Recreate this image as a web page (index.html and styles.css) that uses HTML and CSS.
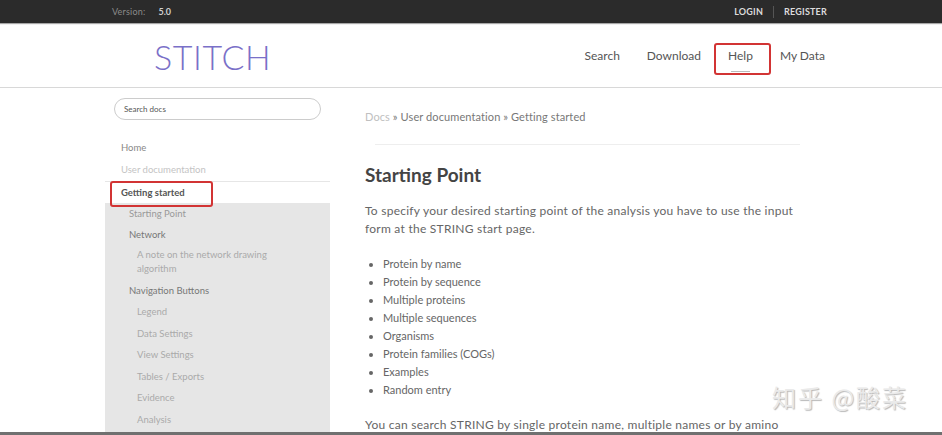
FILE: index.html
```html
<!DOCTYPE html>
<html>
<head>
<meta charset="utf-8">
<link rel="stylesheet" href="styles.css">
</head>
<body>
<div class="topbar">
  <div class="version"><span class="vlabel">Version:</span><span class="vnum">5.0</span></div>
  <div class="auth"><span class="login">LOGIN</span><span class="register">REGISTER</span></div>
</div>
<div class="header">
  <div class="logo">STITCH</div>
  <nav class="mainnav">
    <span class="navlink">Search</span>
    <span class="navlink">Download</span>
    <span class="navlink active">Help<span class="mark mark-help"></span></span>
    <span class="navlink">My Data</span>
  </nav>
</div>
<div class="page">
  <aside class="sidebar">
    <div class="search">Search docs</div>
    <ul class="toc">
      <li class="toc-top">Home</li>
      <li class="toc-top muted">User documentation</li>
      <li class="toc-current">Getting started<span class="mark mark-gs"></span></li>
    </ul>
    <ul class="panel">
      <li class="l2">Starting Point</li>
      <li class="l2 dark">Network</li>
      <li class="l3 two">A note on the network drawing algorithm</li>
      <li class="l2 dark">Navigation Buttons</li>
      <li class="l3">Legend</li>
      <li class="l3">Data Settings</li>
      <li class="l3">View Settings</li>
      <li class="l3">Tables / Exports</li>
      <li class="l3">Evidence</li>
      <li class="l3">Analysis</li>
    </ul>
  </aside>
  <main class="content">
    <div class="crumbs"><span class="docs">Docs</span> » User documentation » Getting started</div>
    <hr class="rule">
    <h1>Starting Point</h1>
    <p>To specify your desired starting point of the analysis you have to use the input form at the STRING start page.</p>
    <ul class="list">
      <li>Protein by name</li>
      <li>Protein by sequence</li>
      <li>Multiple proteins</li>
      <li>Multiple sequences</li>
      <li>Organisms</li>
      <li>Protein families (COGs)</li>
      <li>Examples</li>
      <li>Random entry</li>
    </ul>
    <p class="last">You can search STRING by single protein name, multiple names or by amino acid sequence.</p>
  </main>
</div>
<div class="watermark">知乎 @酸菜</div>
<div class="bottomline"></div>
</body>
</html>
```
FILE: styles.css
```css
html, body {
  margin: 0;
  padding: 0;
  height: 435px;
  overflow: hidden;
  background: #fff;
  font-family: Lato, "Open Sans", sans-serif;
  color: #666;
}
.topbar {
  height: 23px;
  background: #2b2b2b;
  display: flex;
  justify-content: space-between;
  align-items: center;
  padding: 0 115px 0 112px;
  font-size: 9px;
  box-shadow: 0 1px 1px rgba(0,0,0,0.35);
  position: relative;
}
.vlabel { color: #8a8a8a; margin-right: 13px; letter-spacing: 0.2px; }
.vnum { color: #d0d0d0; font-weight: bold; }
.auth { display: flex; align-items: center; }
.login, .register { color: #dcdcdc; font-weight: bold; letter-spacing: 0.2px; }
.login { padding-right: 10px; border-right: 1px solid #555; margin-right: 10px; line-height: 12px; }
.header {
  height: 64px;
  display: flex;
  align-items: center;
  justify-content: space-between;
  padding: 0 117px 0 154px;
  border-bottom: 1px solid #d8d8d8;
}
.logo {
  font-size: 34px;
  color: #7a70c8;
  font-weight: 300;
  letter-spacing: 0.6px;
  margin-top: 2px;
}
.mainnav { display: flex; align-items: center; margin-top: 1px; }
.navlink {
  font-size: 12px;
  color: #555;
  margin-left: 27px;
  position: relative;
}
.navlink.active::after {
  content: "";
  position: absolute;
  left: 3px;
  right: 3px;
  bottom: -9px;
  height: 1px;
  background: #bbb;
}
.mark {
  position: absolute;
  border: 2px solid #d23434;
  border-radius: 3px;
}
.mark-help { left: -14px; top: -5px; width: 53px; height: 28px; }
.page { display: flex; padding-left: 105px; }
.sidebar { width: 225px; padding-top: 10px; }
.search {
  margin: 0 9px;
  height: 20px;
  border: 1px solid #ccc;
  border-radius: 11px;
  font-size: 8px;
  color: #555;
  line-height: 20px;
  padding-left: 9px;
}
.toc, .panel { list-style: none; margin: 0; padding: 0; }
.toc { margin-top: 17px; font-size: 9.5px; }
.toc li { line-height: 22px; padding-left: 16px; }
.toc-top { color: #888; }
.toc-top.muted { color: #c4c4c4; }
.toc-current {
  border-top: 1px solid #e6e6e6;
  font-weight: bold;
  color: #555;
  height: 21px;
  line-height: 21px;
  position: relative;
}
.mark-gs { left: 5px; top: -1px; width: 99px; height: 22px; }
.panel { background: #e6e6e6; font-size: 9.5px; padding-bottom: 3px; }
.panel li { line-height: 21px; }
.panel li.l3:not(.two) { line-height: 21.5px; }
.l2 { padding-left: 24px; color: #999; }
.l2.dark { color: #777; }
.l3 { padding-left: 32px; color: #aaa; }
.l3.two { line-height: 14px !important; padding: 3px 50px 4px 32px; }
.content { margin-left: 35px; width: 440px; padding-top: 20px; }
.crumbs { font-size: 11px; color: #777; line-height: 18px; letter-spacing: 0.1px; }
.docs { color: #c0c0c0; }
.rule { border: 0; border-top: 1px solid #eee; margin: 18px 0 0 10px; width: 425px; }
h1 {
  font-size: 19px;
  color: #444;
  font-weight: bold;
  margin: 18px 0 0;
  line-height: 24px;
}
p { font-size: 12px; line-height: 17.5px; margin: 15px 0 0; color: #666; width: 432px; letter-spacing: 0.25px; }
.list { margin: 18px 0 0; padding-left: 18px; font-size: 11px; color: #666; }
.list li { line-height: 18px; }
.last { margin-top: 17px; }
.watermark {
  position: absolute;
  left: 772px;
  top: 379px;
  font-family: "Noto Sans CJK SC", sans-serif;
  font-size: 24px;
  color: #eaeaea;
  text-shadow: 1px 1px 1px #b8b8b8;
  letter-spacing: 2px;
}
.bottomline {
  position: fixed;
  left: 0;
  right: 0;
  bottom: 0;
  height: 3px;
  background: #707070;
}
```
